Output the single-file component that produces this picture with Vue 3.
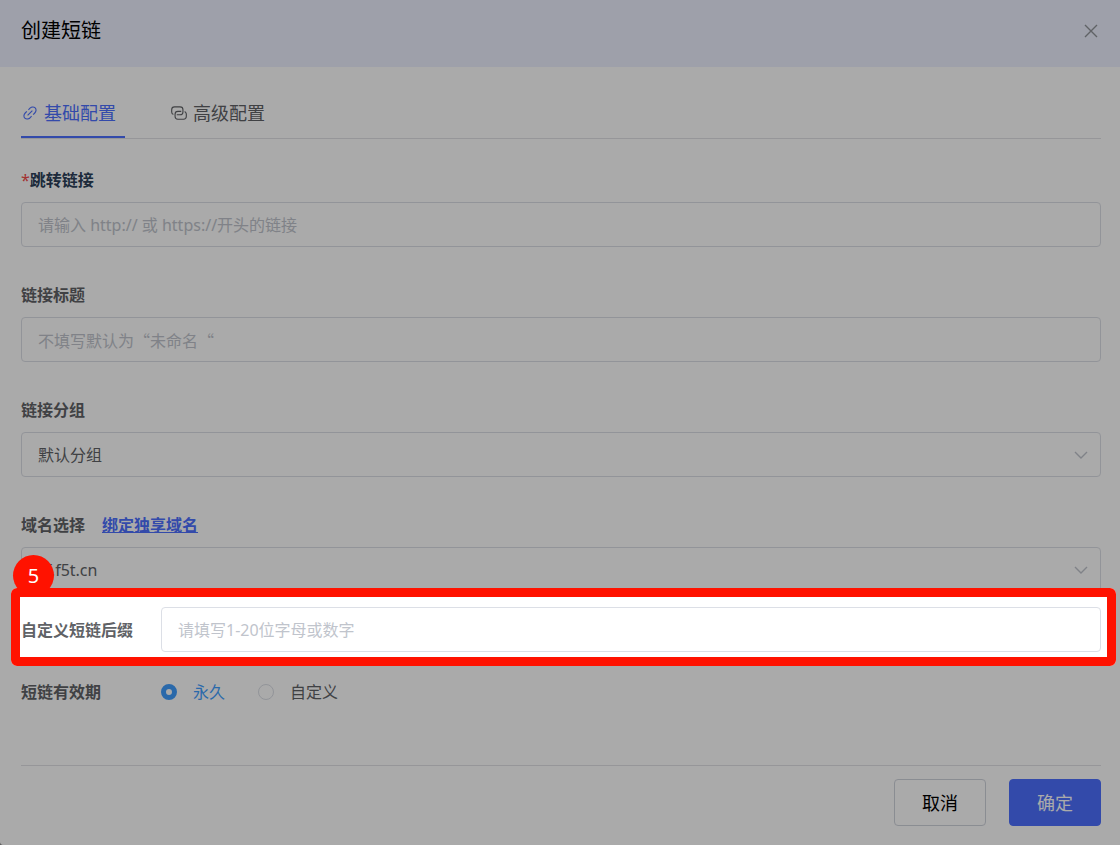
<script setup>
import { ref } from 'vue'

const tab = ref('basic')
const url = ref('')
const title = ref('')
const group = ref('默认分组')
const domain = ref('sf.f5t.cn')
const suffix = ref('')
const validity = ref('forever')
</script>

<template>
  <main class="dialog" lang="zh-CN">
    <header class="header">
      <h1>创建短链</h1>
      <button class="close" type="button" aria-label="关闭">
        <svg width="14" height="14" viewBox="0 0 14 14"><path d="M1 1l12 12M13 1L1 13" /></svg>
      </button>
    </header>

    <form class="body" @submit.prevent>
      <nav class="tabs">
        <button type="button" :class="['tab', { active: tab === 'basic' }]" @click="tab = 'basic'">
          <svg width="18" height="18" viewBox="0 0 1024 1024">
            <path d="M715.648 625.152 670.4 579.904l90.496-90.56c75.008-74.944 85.12-186.368 22.656-248.896-62.528-62.464-173.952-52.352-248.96 22.656L444.16 353.6l-45.248-45.248 90.496-90.496c100.032-99.968 251.968-110.08 339.456-22.656 87.488 87.488 77.312 239.424-22.656 339.456l-90.496 90.496zm-90.496 90.496-90.496 90.496C434.624 906.112 282.688 916.224 195.2 828.8c-87.488-87.488-77.312-239.424 22.656-339.456l90.496-90.496 45.248 45.248-90.496 90.56c-75.008 74.944-85.12 186.368-22.656 248.896 62.528 62.464 173.952 52.352 248.96-22.656l90.496-90.496zm0-362.048 45.248 45.248L398.848 670.4 353.6 625.152z" />
          </svg>
          <span>基础配置</span>
        </button>
        <button type="button" :class="['tab', { active: tab === 'advanced' }]" @click="tab = 'advanced'">
          <svg width="18" height="18" viewBox="0 0 1024 1024">
            <path d="M640 384v64H448a128 128 0 0 0-128 128v128a128 128 0 0 0 128 128h320a128 128 0 0 0 128-128V576a128 128 0 0 0-64-110.848V394.88c74.56 26.368 128 97.472 128 181.056v128a192 192 0 0 1-192 192H448a192 192 0 0 1-192-192V576a192 192 0 0 1 192-192z" />
            <path d="M384 640v-64h192a128 128 0 0 0 128-128V320a128 128 0 0 0-128-128H256a128 128 0 0 0-128 128v128a128 128 0 0 0 64 110.848v70.272A192.064 192.064 0 0 1 64 448V320a192 192 0 0 1 192-192h320a192 192 0 0 1 192 192v128a192 192 0 0 1-192 192z" />
          </svg>
          <span>高级配置</span>
        </button>
      </nav>

      <div class="field">
        <label class="label required" for="url"><i>*</i>跳转链接</label>
        <input id="url" v-model="url" class="control" type="text" placeholder="请输入 http:// 或 https://开头的链接" />
      </div>

      <div class="field">
        <label class="label" for="title">链接标题</label>
        <input id="title" v-model="title" class="control cjk" type="text" placeholder="不填写默认为“未命名“" />
      </div>

      <div class="field">
        <label class="label" for="group">链接分组</label>
        <div class="select">
          <select id="group" v-model="group" class="control">
            <option>默认分组</option>
          </select>
          <svg width="14" height="8" viewBox="0 0 14 8"><path d="M1 1l6 6 6-6" /></svg>
        </div>
      </div>

      <div class="field">
        <div class="label-row">
          <label class="label" for="domain">域名选择</label>
          <a href="#" class="label">绑定独享域名</a>
        </div>
        <div class="select">
          <select id="domain" v-model="domain" class="control">
            <option>sf.f5t.cn</option>
          </select>
          <svg width="14" height="8" viewBox="0 0 14 8"><path d="M1 1l6 6 6-6" /></svg>
        </div>
      </div>

      <div class="row suffix">
        <label class="label" for="suffix">自定义短链后缀</label>
        <input id="suffix" v-model="suffix" class="control" type="text" placeholder="请填写1-20位字母或数字" />
        <div class="spotlight"><span class="badge">5</span></div>
      </div>

      <div class="row validity" role="radiogroup" aria-labelledby="validity-label">
        <span id="validity-label" class="label">短链有效期</span>
        <label class="radio"><input v-model="validity" type="radio" value="forever" /><span>永久</span></label>
        <label class="radio"><input v-model="validity" type="radio" value="custom" /><span>自定义</span></label>
      </div>

      <footer class="footer">
        <button type="button" class="btn">取消</button>
        <button type="submit" class="btn primary">确定</button>
      </footer>
    </form>
  </main>
</template>

<style>
body {
  margin: 0;
  background: #606060;
}
</style>

<style scoped>
* {
  box-sizing: border-box;
}
.dialog {
  position: relative;
  overflow: hidden;
  min-height: 100vh;
  border-bottom-left-radius: 4px;
  background: #fff;
  color: #606266;
  font-family: "Noto Sans", "Noto Sans CJK SC", sans-serif;
  font-size: 16px;
  line-height: 24px;
}
button,
input,
select {
  font: inherit;
  color: inherit;
}
button {
  padding: 0;
  border: 0;
  background: none;
  cursor: pointer;
}
svg {
  display: block;
  flex: none;
  fill: none;
  stroke: currentColor;
  stroke-width: 1.4;
}
.header {
  display: flex;
  align-items: center;
  justify-content: space-between;
  height: 67px;
  padding: 0 22px 5px 21px;
  background: #edf1ff;
}
h1 {
  margin: 0;
  color: #000;
  font-size: 20px;
  font-weight: 400;
  line-height: 28px;
}
.close {
  color: #909399;
}
.body {
  padding: 22px 19px 19px 21px;
}
.tabs {
  display: flex;
  gap: 45px;
  height: 50px;
  border-bottom: 1px solid #e2e2e6;
}
.tab {
  display: flex;
  align-items: center;
  gap: 5px;
  height: 49px;
  padding-right: 9px;
  border-bottom: 2px solid transparent;
  font-size: 18px;
}
.tab svg {
  fill: currentColor;
  stroke: none;
}
.tab.active {
  border-bottom-color: #4d70ff;
  color: #4d70ff;
}
.field {
  margin-top: 29px;
}
.label {
  display: block;
  font-weight: 700;
}
.field .label {
  margin-bottom: 10px;
}
.field + .field {
  margin-top: 36px;
}
.required {
  color: #2c4059;
}
.required i {
  color: #f54a4a;
  font-style: normal;
  font-weight: 400;
}
.label-row {
  display: flex;
  gap: 17px;
}
a.label {
  color: #4d70ff;
}
.control {
  display: block;
  width: 100%;
  height: 45px;
  margin: 0;
  padding: 0 16px;
  border: 1px solid #dcdfe6;
  border-radius: 4px;
  outline: 0;
  background: #fff;
}
.cjk {
  font-family: "Noto Sans CJK SC", sans-serif;
}
.control::placeholder {
  color: #c0c4cc;
  opacity: 1;
}
.select {
  display: grid;
  align-items: center;
}
.select > * {
  grid-area: 1 / 1;
}
.select select {
  appearance: none;
}
.select svg {
  justify-self: end;
  margin-right: 13px;
  color: #c0c4cc;
  pointer-events: none;
}
.row {
  display: flex;
  align-items: center;
}
.row > .label {
  flex: 0 0 140px;
}
.suffix {
  position: relative;
  z-index: 1;
  margin-top: 15px;
}
.spotlight {
  position: absolute;
  inset: -19px -15px -14px -10px;
  border: 9px solid #ff1200;
  border-radius: 6px;
  box-shadow: 0 0 0 4000px rgba(0, 0, 0, 0.333);
  pointer-events: none;
}
.badge {
  position: absolute;
  top: -42px;
  left: -7px;
  width: 41px;
  height: 41px;
  border-radius: 50%;
  background: #ff1200;
  color: #fff;
  font-size: 20px;
  line-height: 41px;
  text-align: center;
}
.validity {
  margin-top: 28px;
}
.radio {
  display: flex;
  align-items: center;
  gap: 16px;
  margin-right: 33px;
}
.radio input {
  appearance: none;
  width: 16px;
  height: 16px;
  margin: 0;
  border: 1px solid #dcdfe6;
  border-radius: 50%;
  background: #fff;
}
.radio input:checked {
  border: 5px solid #409eff;
}
.radio input:checked + span {
  color: #409eff;
}
.footer {
  display: flex;
  justify-content: flex-end;
  gap: 23px;
  margin-top: 61px;
  padding-top: 13px;
  border-top: 1px solid #e2e2e6;
}
.btn {
  width: 92px;
  height: 47px;
  border: 1px solid #d0d4dc;
  border-radius: 4px;
  background: #fff;
  color: #000;
  font-size: 18px;
}
.primary {
  border-color: #4d70ff;
  background: #4d70ff;
  color: #fff;
}
</style>
